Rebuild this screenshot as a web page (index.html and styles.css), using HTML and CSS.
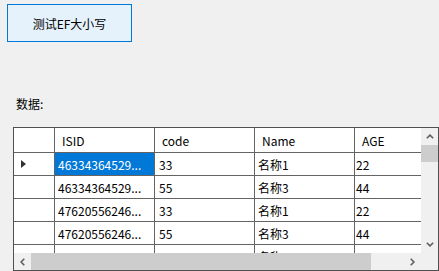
FILE: index.html
```html
<!DOCTYPE html>
<html lang="zh-CN">
<head>
<meta charset="utf-8">
<title>测试EF大小写</title>
<link rel="stylesheet" href="styles.css">
</head>
<body>
<div class="form">
  <button class="btn" type="button">测试EF大小写</button>
  <div class="label">数据:</div>
  <div class="grid">
    <div class="cells">
      <div class="row head">
        <div class="cell rh"></div>
        <div class="cell hc">ISID</div>
        <div class="cell hc">code</div>
        <div class="cell hc">Name</div>
        <div class="cell hc">AGE</div>
      </div>
      <div class="row">
        <div class="cell rh"><span class="tri"></span></div>
        <div class="cell sel">46334364529...</div>
        <div class="cell c2">33</div>
        <div class="cell">名称1</div>
        <div class="cell c4">22</div>
      </div>
      <div class="row">
        <div class="cell rh"></div>
        <div class="cell">46334364529...</div>
        <div class="cell c2">55</div>
        <div class="cell">名称3</div>
        <div class="cell c4">44</div>
      </div>
      <div class="row">
        <div class="cell rh"></div>
        <div class="cell">47620556246...</div>
        <div class="cell c2">33</div>
        <div class="cell">名称1</div>
        <div class="cell c4">22</div>
      </div>
      <div class="row">
        <div class="cell rh"></div>
        <div class="cell">47620556246...</div>
        <div class="cell c2">55</div>
        <div class="cell">名称3</div>
        <div class="cell c4">44</div>
      </div>
      <div class="row">
        <div class="cell rh"></div>
        <div class="cell">48871154549...</div>
        <div class="cell c2">33</div>
        <div class="cell">名称1</div>
        <div class="cell c4">22</div>
      </div>
    </div>
    <div class="vscroll">
      <div class="arrow"><svg width="8" height="5" viewBox="0 0 8 5"><polyline points="0.8,4.3 4,1.1 7.2,4.3" fill="none" stroke="#606060" stroke-width="1.6"/></svg></div>
      <div class="vtrack"><div class="vthumb"></div></div>
      <div class="arrow"><svg width="8" height="5" viewBox="0 0 8 5"><polyline points="0.8,0.7 4,3.9 7.2,0.7" fill="none" stroke="#606060" stroke-width="1.6"/></svg></div>
    </div>
    <div class="hscroll">
      <div class="arrow"><svg width="5" height="8" viewBox="0 0 5 8"><polyline points="4.3,0.8 1.1,4 4.3,7.2" fill="none" stroke="#606060" stroke-width="1.6"/></svg></div>
      <div class="htrack"><div class="hthumb"></div></div>
      <div class="arrow"><svg width="5" height="8" viewBox="0 0 5 8"><polyline points="0.7,0.8 3.9,4 0.7,7.2" fill="none" stroke="#606060" stroke-width="1.6"/></svg></div>
    </div>
    <div class="corner"></div>
  </div>
</div>
</body>
</html>
```
FILE: styles.css
```css
html, body {
  margin: 0;
  padding: 0;
  background: #f0f0f0;
}
body {
  font-family: "Noto Sans CJK SC", "Noto Sans", sans-serif;
  font-size: 12px;
  color: #000;
  width: 439px;
  height: 271px;
  overflow: hidden;
}
.form {
  display: flex;
  flex-direction: column;
  align-items: flex-start;
}
.btn {
  margin: 4px 0 0 7px;
  width: 125px;
  height: 38px;
  box-sizing: border-box;
  border: 1px solid #0078d7;
  background: #e5f1fb;
  font: inherit;
  color: #000;
  padding: 0;
  display: flex;
  align-items: center;
  justify-content: center;
}
.label {
  margin: 54px 0 0 16px;
  line-height: 16px;
}
.grid {
  margin: 15px 0 0 13px;
  width: 426px;
  height: 144px;
  box-sizing: border-box;
  border: 1px solid #505050;
  display: grid;
  grid-template-columns: 407px 17px;
  grid-template-rows: 125px 17px;
  background: #f0f0f0;
}
.cells {
  overflow: hidden;
  background: #fff;
}
.row {
  display: grid;
  grid-template-columns: 41px 100px 100px 100px 100px;
  height: 23px;
}
.row.head {
  height: 25px;
}
.cell {
  box-sizing: border-box;
  border-right: 1px solid #646464;
  border-bottom: 1px solid #646464;
  background: #fff;
  display: flex;
  align-items: center;
  padding-left: 3px;
  white-space: nowrap;
  overflow: hidden;
}
.cell.hc {
  padding-left: 7px;
}
.cell.c2 {
  padding-left: 4px;
}
.cell.c4 {
  padding-left: 1px;
}
.cell.rh {
  padding-left: 7px;
}
.cell.sel {
  background: #0078d7;
  color: #fff;
}
.tri {
  width: 0;
  height: 0;
  border-left: 5px solid #333;
  border-top: 4px solid transparent;
  border-bottom: 4px solid transparent;
}
.vscroll {
  display: flex;
  flex-direction: column;
  background: #f0f0f0;
}
.hscroll {
  display: flex;
  background: #f0f0f0;
}
.arrow {
  width: 17px;
  height: 17px;
  flex: none;
  display: flex;
  align-items: center;
  justify-content: center;
}
.vtrack {
  flex: 1;
}
.vthumb {
  height: 17px;
  background: #cdcdcd;
}
.htrack {
  flex: 1;
  display: flex;
}
.hthumb {
  width: 340px;
  background: #cdcdcd;
}
.corner {
  background: #f0f0f0;
}
```
